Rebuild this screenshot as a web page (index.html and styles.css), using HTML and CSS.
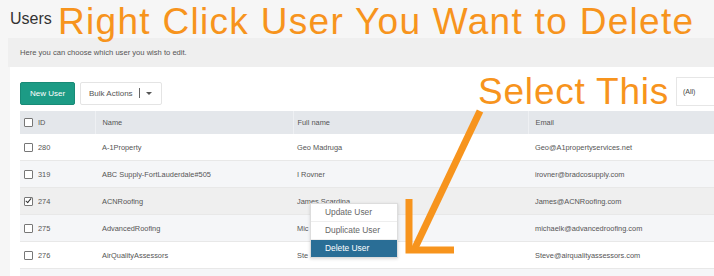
FILE: index.html
```html
<!DOCTYPE html>
<html lang="en">
<head>
    <meta charset="UTF-8">
    <title>Users</title>
    <link rel="stylesheet" href="styles.css">
</head>
<body>
    <div class="page">
        <div class="header">
            <h1>Users</h1>
        </div>
        <div class="intro">Here you can choose which user you wish to edit.</div>
        <div class="panel">
            <div class="toolbar">
                <button class="btn-new">New User</button>
                <button class="btn-bulk">Bulk Actions <span class="sep"></span><span class="caret"></span></button>
                <div class="filter">(All)</div>
            </div>
            <table class="users">
                <colgroup>
                    <col class="w-id">
                    <col class="w-name">
                    <col class="w-full">
                    <col>
                </colgroup>
                <thead>
                    <tr>
                        <th class="col-id"><span class="box"></span>ID</th>
                        <th>Name</th>
                        <th class="col-full">Full name</th>
                        <th>Email</th>
                    </tr>
                </thead>
                <tbody>
                    <tr>
                        <td class="col-id"><span class="box"></span>280</td>
                        <td>A-1Property</td>
                        <td class="col-full">Geo Madruga</td>
                        <td>Geo@A1propertyservices.net</td>
                    </tr>
                    <tr class="alt">
                        <td class="col-id"><span class="box"></span>319</td>
                        <td>ABC Supply-FortLauderdale#505</td>
                        <td class="col-full">I Rovner</td>
                        <td>irovner@bradcosupply.com</td>
                    </tr>
                    <tr class="selected">
                        <td class="col-id"><span class="box checked"></span>274</td>
                        <td>ACNRoofing</td>
                        <td class="col-full">James Scardina</td>
                        <td>James@ACNRoofing.com</td>
                    </tr>
                    <tr class="alt">
                        <td class="col-id"><span class="box"></span>275</td>
                        <td>AdvancedRoofing</td>
                        <td class="col-full">Mic</td>
                        <td>michaelk@advancedroofing.com</td>
                    </tr>
                    <tr>
                        <td class="col-id"><span class="box"></span>276</td>
                        <td>AirQualityAssessors</td>
                        <td class="col-full">Ste</td>
                        <td>Steve@airqualityassessors.com</td>
                    </tr>
                    <tr class="alt">
                        <td class="col-id"></td>
                        <td></td>
                        <td></td>
                        <td></td>
                    </tr>
                </tbody>
            </table>
        </div>

        <ul class="context-menu">
            <li>Update User</li>
            <li>Duplicate User</li>
            <li class="active">Delete User</li>
        </ul>

        <div class="note note-top">Right Click User You Want to Delete</div>
        <div class="note note-select">Select This</div>
        <svg class="arrow" width="100" height="150" viewBox="0 0 100 150">
            <path d="M78 3 L12 142" stroke="#f7941d" stroke-width="7" fill="none"/>
            <path d="M7 91 L7 142 L52 142" stroke="#f7941d" stroke-width="7" fill="none"/>
        </svg>
    </div>
</body>
</html>
```

FILE: styles.css
```css
body {
    margin: 0;
    background-color: #f6f6f6;
    font-family: "Liberation Sans", Arial, sans-serif;
    color: #444;
    overflow: hidden;
}

.page {
    position: relative;
    width: 714px;
    height: 276px;
    overflow: hidden;
}

.header {
    height: 38px;
    display: flex;
    align-items: center;
    padding-left: 10px;
}

.header h1 {
    margin: 0;
    font-size: 16px;
    font-weight: normal;
    color: #333;
}

.intro {
    margin-left: 8px;
    height: 29px;
    background-color: #efefef;
    padding: 10px 0 0 12px;
    box-sizing: border-box;
    font-size: 7.6px;
    color: #555;
}

.panel {
    margin-left: 10px;
    background-color: #fff;
    padding: 9px 0 0 10px;
    height: 209px;
    box-sizing: border-box;
}

.toolbar {
    display: flex;
    align-items: center;
    gap: 5px;
    height: 34px;
}

.toolbar button {
    height: 23px;
    font-family: inherit;
    font-size: 8px;
    border-radius: 2px;
    padding: 0 8px;
    white-space: nowrap;
}

.btn-new {
    background-color: #1c9b85;
    border: 1px solid #188a76;
    color: #fff;
    width: 55px;
}

.btn-bulk {
    background-color: #fff;
    border: 1px solid #e4e4e4;
    color: #555;
    width: 82px;
    display: flex;
    align-items: center;
}

.btn-bulk .sep {
    width: 1px;
    height: 10px;
    background-color: #666;
    margin: 0 6px 0 6px;
}

.btn-bulk .caret {
    width: 0;
    height: 0;
    border-left: 3px solid transparent;
    border-right: 3px solid transparent;
    border-top: 3px solid #555;
}

.filter {
    margin-left: auto;
    margin-right: -20px;
    width: 58px;
    height: 29px;
    margin-top: -4px;
    border: 1px solid #e6e6e6;
    box-sizing: border-box;
    font-size: 7px;
    padding: 10px 0 0 6px;
    color: #444;
}

.users {
    border-collapse: collapse;
    width: 714px;
    margin-top: 1px;
    font-size: 7.4px;
    color: #555;
    table-layout: fixed;
}

.users .w-id {
    width: 75px;
}

.users .w-name {
    width: 198px;
}

.users .w-full {
    width: 235px;
}

.users th {
    background-color: #e4e7eb;
    font-weight: normal;
    text-align: left;
    height: 23px;
    padding: 0 0 0 7px;
    border-right: 1px solid #eef0f3;
}

.users td {
    height: 26px;
    padding: 0 0 0 7px;
    border-bottom: 1px solid #e8e8e8;
}

.users .col-id {
    padding-left: 4px;
}

.users .col-full {
    padding-left: 4px;
}

.users tr.alt td {
    background-color: #f5f6f8;
}

.users tr.selected td {
    background-color: #efefef;
}

.box {
    display: inline-block;
    width: 7px;
    height: 7px;
    border: 1px solid #777;
    border-radius: 1px;
    vertical-align: -2px;
    margin-right: 5px;
    background-color: #fff;
    position: relative;
}

.box.checked::after {
    content: "";
    position: absolute;
    left: 2px;
    top: -1px;
    width: 2px;
    height: 5px;
    border-right: 1px solid #333;
    border-bottom: 1px solid #333;
    transform: rotate(40deg);
}

.context-menu {
    position: absolute;
    left: 310px;
    top: 203px;
    width: 86px;
    margin: 0;
    padding: 0;
    list-style: none;
    background-color: #fff;
    border: 1px solid #ddd;
    box-shadow: 0 1px 3px rgba(0, 0, 0, 0.15);
    font-size: 8.4px;
    color: #666;
}

.context-menu li {
    height: 17px;
    line-height: 17px;
    padding-left: 14px;
    border-bottom: 1px solid #eee;
}

.context-menu li.active {
    background-color: #2a6e96;
    color: #fff;
    border-bottom: none;
}

.note {
    position: absolute;
    color: #f7941d;
    font-size: 37px;
    line-height: 1;
    white-space: nowrap;
}

.note-top {
    left: 58px;
    top: 3px;
    letter-spacing: 1.3px;
}

.note-select {
    left: 478px;
    top: 73px;
    letter-spacing: 0.8px;
}

.arrow {
    position: absolute;
    left: 402px;
    top: 108px;
}
```
